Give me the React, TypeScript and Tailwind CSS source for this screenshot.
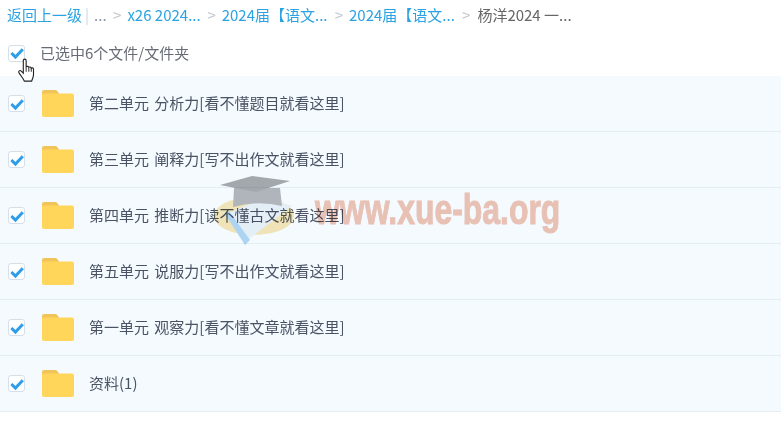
import React from 'react';

const rows = [
  '第二单元 分析力[看不懂题目就看这里]',
  '第三单元 阐释力[写不出作文就看这里]',
  '第四单元 推断力[读不懂古文就看这里]',
  '第五单元 说服力[写不出作文就看这里]',
  '第一单元 观察力[看不懂文章就看这里]',
  '资料(1)',
];

const crumbs = [
  { label: 'x26 2024...', w: 'w-[74px]' },
  { label: '2024届【语文...', w: 'w-[107px]' },
  { label: '2024届【语文...', w: 'w-[107px]' },
];

function Check() {
  return (
    <span className="flex h-[17px] w-[17px] shrink-0 items-center justify-center rounded-[3px] border border-[#d5dfe8] bg-white">
      <svg viewBox="0 0 14 14" className="h-[14px] w-[14px]">
        <path d="M1.4 7 L5.4 11 L12.8 3.2" fill="none" stroke="#2f9ee8" strokeWidth="3" />
      </svg>
    </span>
  );
}

function Folder() {
  return (
    <svg viewBox="0 0 32 27" className="h-[27px] w-[32px] shrink-0">
      <path d="M0 2 Q0 0 2 0 H13 Q15 0 16 2 L17 4 H2 L0 6 Z" fill="#f0c458" />
      <path d="M0 5 Q0 3.6 2 3.6 H30 Q32 3.6 32 5.6 V25 Q32 27 30 27 H2 Q0 27 0 25 Z" fill="#ffd659" />
    </svg>
  );
}

function HandCursor() {
  return (
    <svg viewBox="0 0 16.5 23.5" className="h-[24px] w-[18px]">
      <path
        d="M5.6 2.6 C5.6 0.6 8.4 0.6 8.4 2.6 V9 C8.8 7.8 10.8 7.8 11 9.4 C11.4 8.4 13.2 8.6 13.4 10 C13.9 9.2 15.6 9.6 15.6 11 V16.5 C15.6 19 14.4 20 13.8 22.6 H6.6 C5.6 20 3.6 18 1.4 14.6 C0.4 13 2.2 11.4 3.6 12.8 L5.6 14.8 Z"
        fill="#ffffff"
        stroke="#222222"
        strokeWidth="1.1"
      />
      <path d="M8.4 9 V13.5 M11 9.4 V13.5 M13.4 10 V13.5" stroke="#222222" strokeWidth="0.9" fill="none" />
    </svg>
  );
}

function Watermark() {
  return (
    <div className="pointer-events-none absolute left-[214px] top-[176px] flex items-start mix-blend-multiply">
      <svg viewBox="0 0 86 70" className="h-[70px] w-[86px]">
        <ellipse cx="40" cy="40" rx="40" ry="19" fill="#fae8b8" />
        <path d="M12 38 L31 66 L78 30 L50 22 Z" fill="#eef3f7" />
        <path d="M11 38 L31 69 L36 64 L15 35 Z" fill="#b5d9f2" />
        <path d="M20 12 H66 L68 30 Q44 24 19 31 Z" fill="#b7b9bb" />
        <path d="M6 9 L38 0 L76 5 L42 16 Z" fill="#aaacae" />
      </svg>
      <span className="ml-[15px] mt-[13px] inline-block origin-left scale-x-[0.76] font-['Liberation_Sans',sans-serif] text-[42px] font-bold leading-none text-[#f3c5b6] [-webkit-text-stroke:1px_#f3c5b6]">
        www.xue-ba.org
      </span>
    </div>
  );
}

export default function App() {
  return (
    <div className="relative h-[422px] w-[781px] overflow-hidden bg-white font-['Noto_Sans_CJK_SC',sans-serif] text-[15px] text-[#5f6673]">
      {/* Breadcrumb */}
      <div className="flex h-[30px] items-center whitespace-nowrap pl-[7px] text-[#2ba3e2]">
        <span className="w-[78px]">返回上一级</span>
        <span className="text-[#c5d8e8]">|</span>
        <span className="ml-[5px] w-[13px] text-[#8a94a0]">...</span>
        {crumbs.map((c, i) => (
          <React.Fragment key={i}>
            <span className="mx-[6px] text-[#c3c9d0]">&gt;</span>
            <span className={c.w}>{c.label}</span>
          </React.Fragment>
        ))}
        <span className="ml-[6px] mr-[7px] text-[#c3c9d0]">&gt;</span>
        <span className="text-[#666666]">杨洋2024 一...</span>
      </div>

      {/* Selection bar */}
      <div className="relative flex h-[46px] items-center pl-[8px]">
        <Check />
        <span className="ml-[15px] text-[#666b75]">已选中6个文件/文件夹</span>
        <div className="absolute left-[17px] top-[28px]">
          <HandCursor />
        </div>
      </div>

      {/* List */}
      <div className="bg-[#f4fafe]">
        {rows.map((name) => (
          <div key={name} className="flex h-[56px] items-center border-b border-[#e2edf4] pl-[8px]">
            <Check />
            <span className="ml-[17px] flex">
              <Folder />
            </span>
            <span className="ml-[15px] text-[#4a5364] [word-spacing:2px]">{name}</span>
          </div>
        ))}
      </div>

      <Watermark />
    </div>
  );
}
